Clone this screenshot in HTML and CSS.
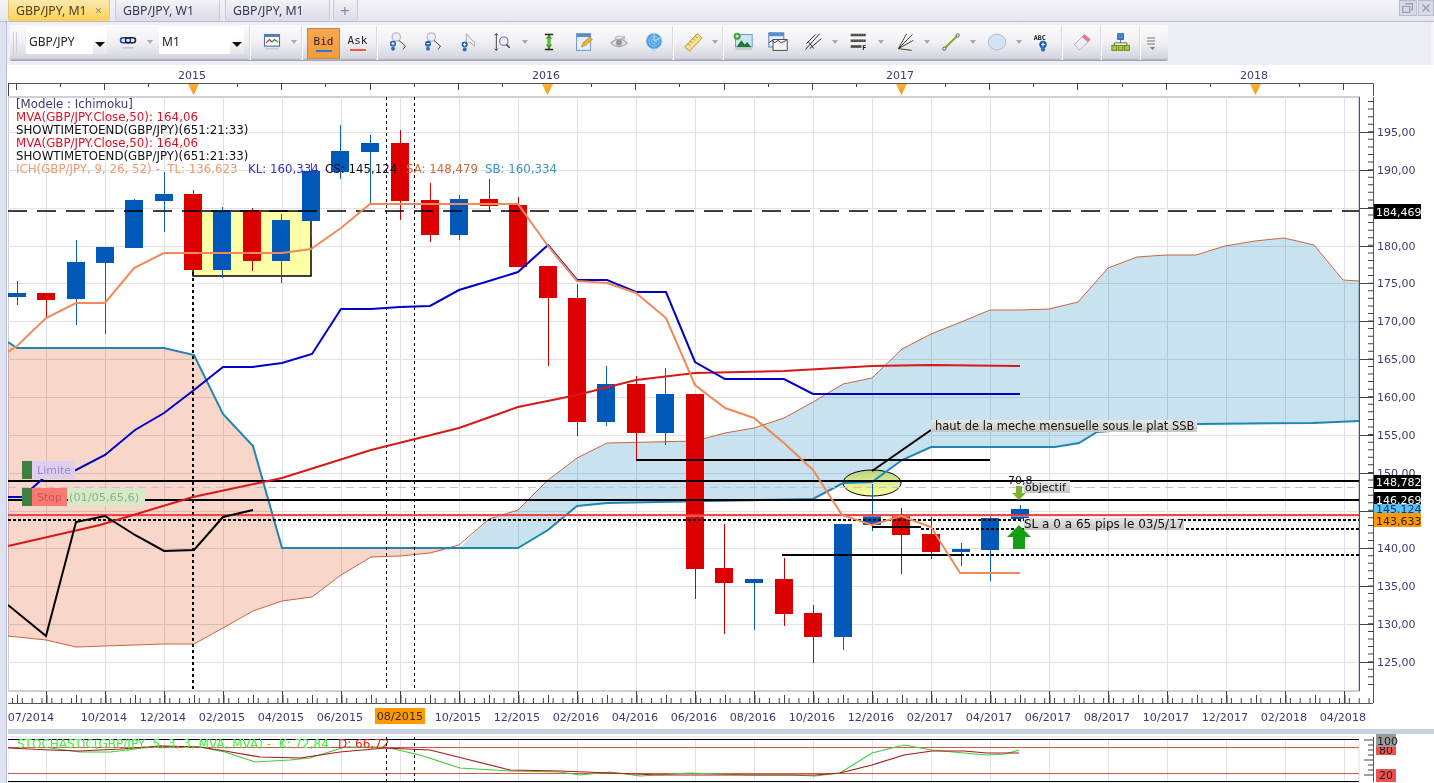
FILE: index.html
```html
<!DOCTYPE html>
<html lang="fr">
<head>
<meta charset="utf-8">
<title>GBP/JPY, M1</title>
<link rel="stylesheet" href="styles.css">
</head>
<body>
<svg class="defs" aria-hidden="true">
  <defs>
    <linearGradient id="marker" x1="0" y1="0" x2="0" y2="1"><stop offset="0" stop-color="#ffb040"/><stop offset="1" stop-color="#f59a10"/></linearGradient>
    <linearGradient id="ell" x1="0" y1="0" x2="0" y2="1"><stop offset="0" stop-color="#b4d288"/><stop offset=".45" stop-color="#dcea8e"/><stop offset="1" stop-color="#ffff96"/></linearGradient>
    <linearGradient id="note" x1="0" y1="0" x2="0" y2="1"><stop offset="0" stop-color="#e8e8e8"/><stop offset="1" stop-color="#c4c4c4"/></linearGradient>
    <symbol id="i-zoomin" viewBox="0 0 24 24"><circle cx="10" cy="6" r="5" fill="#eef" stroke="#bbb" stroke-width="1.5"/><path d="M13 10l8 7-3 4" fill="none" stroke="#444" stroke-width="1.2"/><circle cx="6" cy="14" r="3.6" fill="#1a5fb4"/><path d="M4 14h4M6 12v4" stroke="#fff" stroke-width="1.3"/><circle cx="6" cy="20" r="2.4" fill="#3a6fb8"/></symbol>
    <symbol id="i-zoomout" viewBox="0 0 24 24"><circle cx="10" cy="6" r="5" fill="#eef" stroke="#bbb" stroke-width="1.5"/><path d="M13 10l8 7-3 4" fill="none" stroke="#444" stroke-width="1.2"/><circle cx="6" cy="14" r="3.6" fill="#1a5fb4"/><path d="M4 14h4" stroke="#fff" stroke-width="1.3"/><circle cx="6" cy="20" r="2.4" fill="#3a6fb8"/></symbol>
    <symbol id="i-cursor" viewBox="0 0 24 24"><path d="M10 2v13l4-3 6 5V13z" fill="#eef" stroke="#aaa" stroke-width="1.2"/><circle cx="8" cy="15" r="3.6" fill="#1a5fb4"/><path d="M6 15h4M8 13v4" stroke="#fff" stroke-width="1.3"/><circle cx="8" cy="21" r="2.4" fill="#3a6fb8"/></symbol>
    <symbol id="i-fit" viewBox="0 0 24 24"><path d="M4 2v20M2 4l2-2 2 2M2 20l2 2 2-2" fill="none" stroke="#333" stroke-width="1.1"/><circle cx="13" cy="11" r="5" fill="#eef" stroke="#778" stroke-width="1.4"/><path d="M16 15l4 4" stroke="#333" stroke-width="1.6"/></symbol>
    <symbol id="i-height" viewBox="0 0 24 24"><path d="M7 3h10M7 21h10M12 3v18" stroke="#222" stroke-width="1.6" fill="none"/><path d="M12 3l4 5H8zM12 20l4-5H8z" fill="#3a9a20"/><rect x="10" y="7" width="4" height="9" fill="#5dbb3a"/></symbol>
    <symbol id="i-note" viewBox="0 0 24 24"><rect x="3" y="2" width="17" height="20" fill="#e6eef9" stroke="#5a8ccc"/><rect x="3" y="2" width="17" height="4" fill="#5a8ccc"/><path d="M9 18l2-5 8-7 3 3-8 7z" fill="#f0b030" stroke="#b07010" stroke-width=".7"/></symbol>
    <symbol id="i-eye" viewBox="0 0 24 24"><path d="M2 13q10-9 20 0q-10 9-20 0z" fill="#e2e2e2" stroke="#aaa" stroke-width="1.3"/><circle cx="12" cy="13" r="3.6" fill="#999"/><path d="M6 7q6-5 11-1l1-3 2 6-6-1 2-1q-4-3-8 1z" fill="#bbb"/></symbol>
    <symbol id="i-globe" viewBox="0 0 24 24"><circle cx="12" cy="11" r="9.5" fill="#4f9fe0" stroke="#a5cdee"/><circle cx="12" cy="11" r="6" fill="none" stroke="#a9d4f2"/><circle cx="12" cy="11" r="3" fill="none" stroke="#a9d4f2"/><path d="M12 11l8-4M12 11V2" stroke="#cfe8f8"/><path d="M8 23l4-2 4 2" fill="#b8d6ee"/></symbol>
    <symbol id="i-ruler" viewBox="0 0 24 24"><path d="M2 18L17 2l6 5L8 23z" fill="#f7de88" stroke="#a88a30"/><path d="M6 14l2 2M9 11l2 2M12 8l2 2M15 5l2 2" stroke="#8a6d20"/></symbol>
    <symbol id="i-pic" viewBox="0 0 24 24"><rect x="3" y="3" width="20" height="15" fill="#cfe4f8" stroke="#5a8ccc"/><path d="M4 18l6-8 4 5 3-3 5 6z" fill="#1c7a2c"/><circle cx="5" cy="5" r="4.2" fill="#3aa03a"/><path d="M3 5h4M5 3v4" stroke="#fff" stroke-width="1.3"/><rect x="3" y="19" width="20" height="3" fill="#c8cfc8"/></symbol>
    <symbol id="i-win" viewBox="0 0 24 24"><rect x="1" y="1" width="18" height="17" fill="#e8f0fa" stroke="#3a6cb8"/><rect x="1" y="1" width="18" height="4" fill="#5a8ccc"/><rect x="6" y="9" width="17" height="13" fill="#f4f4f8" stroke="#333"/><path d="M1 13l4-3 3 3 4-3 4 3 6-3" fill="none" stroke="#222"/></symbol>
    <symbol id="i-fork" viewBox="0 0 24 24"><path d="M3 21L20 2M8 20L22 8M4 14L15 3M6 11l7 9" fill="none" stroke="#222" stroke-width="1.1"/></symbol>
    <symbol id="i-fib" viewBox="0 0 24 24"><path d="M2 2h18v3H2zM2 9h18v3H2zM2 16h13v3H2z" fill="#444"/><path d="M2 3.500h18M2 10.500h18" stroke="#aaa" stroke-dasharray="1 2"/><text class="ico-t" x="16" y="21">F</text></symbol>
    <symbol id="i-fan" viewBox="0 0 24 24"><path d="M4 20L21 3M4 20L22 10M4 20L14 2M4 20l16 2" fill="none" stroke="#333" stroke-width="1.1"/></symbol>
    <symbol id="i-line" viewBox="0 0 24 24"><path d="M4 20L20 4" stroke="#7aa61c" stroke-width="2.4"/><circle cx="4" cy="20" r="2" fill="#ddd" stroke="#555"/><circle cx="20" cy="4" r="2" fill="#ddd" stroke="#555"/></symbol>
    <symbol id="i-ellipse" viewBox="0 0 24 24"><ellipse cx="12" cy="12" rx="10.500" ry="9.500" fill="#d5e3f3" stroke="#9db4cf"/></symbol>
    <symbol id="i-abc" viewBox="0 0 24 24"><text class="ico-t" x="1" y="9">ABC</text><circle cx="12" cy="15" r="4.400" fill="#1a5fb4"/><path d="M9.600 15h4.800M12 12.600v4.800" stroke="#fff" stroke-width="1.4"/><circle cx="12" cy="21" r="2.600" fill="#3a6fb8"/></symbol>
    <symbol id="i-eraser" viewBox="0 0 24 24"><path d="M3 15L15 3l7 6-12 12H8z" fill="#ececf2" stroke="#aaa"/><path d="M12 6l3-3 7 6-3 3z" fill="#e8788a"/></symbol>
    <symbol id="i-tree" viewBox="0 0 24 24"><rect x="8" y="2" width="7" height="7" fill="#3f88d8" stroke="#205fa8"/><path d="M11.500 9v4M4 17v-4h15v4" fill="none" stroke="#555"/><rect x="1" y="16" width="6" height="6" fill="#a8c83a" stroke="#5c7a10"/><rect x="8.500" y="16" width="6" height="6" fill="#a8c83a" stroke="#5c7a10"/><rect x="16" y="16" width="6" height="6" fill="#a8c83a" stroke="#5c7a10"/></symbol>
  </defs>
</svg>

<div class="app">
  <header class="tabbar">
    <div class="tab tab-active"><span>GBP/JPY, M1</span><span class="tab-x">✕</span></div>
    <div class="tab"><span>GBP/JPY, W1</span></div>
    <div class="tab"><span>GBP/JPY, M1</span></div>
    <div class="tab tab-plus">+</div>
    <div class="win-btns">
      <svg class="win-btn" viewBox="0 0 18 16"><path d="M6 3h8v7h-2M3 6h8v7H3z" fill="none" stroke="#9a9ab0" stroke-width="1.4"/></svg>
      <svg class="win-btn win-close" viewBox="0 0 16 16"><path d="M4 4l8 8M12 4l-8 8" stroke="#a0a0b4" stroke-width="2"/></svg>
    </div>
  </header>

  <div class="toolband">
    <div class="toolbar">
      <div class="grip"></div>
      <div class="combo combo-sym"><span>GBP/JPY</span><i class="combo-arrow"></i></div>
      <div class="btn btn-link"><svg class="ico" viewBox="0 0 24 24"><rect x="3" y="7" width="12" height="6" rx="3" fill="none" stroke="#1a3fa8" stroke-width="1.800"/><rect x="9" y="7" width="12" height="6" rx="3" fill="none" stroke="#222" stroke-width="1.800"/><path d="M5 19h14" stroke="#c8c8d4" stroke-width="2"/></svg></div>
      <div class="drop drop-link"></div>
      <div class="combo combo-tf"><span>M1</span><i class="combo-arrow"></i></div>
      <div class="sep"></div>
      <div class="btn btn-chart"><svg class="ico" viewBox="0 0 24 24"><rect x="3" y="3" width="18" height="14" fill="#f4f7fc" stroke="#4a6fb0" stroke-width="1.300"/><rect x="3" y="3" width="18" height="3" fill="#5a80c0"/><path d="M5 13l4-4 3 3" fill="none" stroke="#c03020" stroke-width="1.400"/><path d="M12 12l3-3 4 3" fill="none" stroke="#2a9030" stroke-width="1.400"/><path d="M4 20h16" stroke="#c8c8d4" stroke-width="2"/></svg></div>
      <div class="drop"></div>
      <div class="sep"></div>
      <div class="ba ba-on"><span>Bid</span><i class="ba-bid"></i></div>
      <div class="ba"><span>Ask</span><i class="ba-ask"></i></div>
      <div class="sep"></div>
      <div class="btn btn-first"><svg class="ico"><use href="#i-zoomin"/></svg></div>
      <div class="btn"><svg class="ico"><use href="#i-zoomout"/></svg></div>
      <div class="btn"><svg class="ico"><use href="#i-cursor"/></svg></div>
      <div class="btn"><svg class="ico"><use href="#i-fit"/></svg></div>
      <div class="drop"></div>
      <div class="btn"><svg class="ico"><use href="#i-height"/></svg></div>
      <div class="btn"><svg class="ico"><use href="#i-note"/></svg></div>
      <div class="btn"><svg class="ico"><use href="#i-eye"/></svg></div>
      <div class="btn"><svg class="ico"><use href="#i-globe"/></svg></div>
      <div class="sep"></div>
      <div class="btn"><svg class="ico"><use href="#i-ruler"/></svg></div>
      <div class="drop"></div>
      <div class="sep"></div>
      <div class="btn"><svg class="ico"><use href="#i-pic"/></svg></div>
      <div class="btn"><svg class="ico"><use href="#i-win"/></svg></div>
      <div class="btn"><svg class="ico"><use href="#i-fork"/></svg></div>
      <div class="drop"></div>
      <div class="btn"><svg class="ico"><use href="#i-fib"/></svg></div>
      <div class="drop"></div>
      <div class="btn"><svg class="ico"><use href="#i-fan"/></svg></div>
      <div class="drop"></div>
      <div class="btn"><svg class="ico"><use href="#i-line"/></svg></div>
      <div class="drop"></div>
      <div class="btn"><svg class="ico"><use href="#i-ellipse"/></svg></div>
      <div class="drop"></div>
      <div class="btn"><svg class="ico"><use href="#i-abc"/></svg></div>
      <div class="sep"></div>
      <div class="btn"><svg class="ico"><use href="#i-eraser"/></svg></div>
      <div class="sep"></div>
      <div class="btn"><svg class="ico"><use href="#i-tree"/></svg></div>
      <div class="sep"></div>
      <div class="more"><svg viewBox="0 0 10 14" class="more-ico"><path d="M1 2h8M1 5h8M1 8h8" stroke="#777"/><path d="M4 11h5l-2.500 3z" fill="#777"/></svg></div>
    </div>
  </div>

  <svg class="chart" viewBox="8 65 1426 718" role="img" aria-label="GBP/JPY monthly chart">
    <!-- year scale -->
    <g class="t-axis">
      <text x="192" y="78.500" text-anchor="middle">2015</text>
      <text x="546" y="78.500" text-anchor="middle">2016</text>
      <text x="900" y="78.500" text-anchor="middle">2017</text>
      <text x="1254" y="78.500" text-anchor="middle">2018</text>
    </g>
    <path class="rule" d="M8 83.500H1373.500V96"/>
    <path class="tick" d="M8.500 84v12M16.500 84v6M60.500 84v3M104.500 84v6M148.500 84v3M193.500 84v6M237.500 84v3M281.500 84v6M325.500 84v3M370.500 84v6M414.500 84v3M458.500 84v6M502.500 84v3M547.500 84v6M591.500 84v3M635.500 84v6M679.500 84v3M724.500 84v6M768.500 84v3M812.500 84v6M856.500 84v3M901.500 84v6M945.500 84v3M989.500 84v6M1033.500 84v3M1077.500 84v6M1122.500 84v3M1166.500 84v6M1210.500 84v3M1254.500 84v6M1299.500 84v3M1343.500 84v6"/>
    <path class="marker" d="M188 84h11l-5.500 11zM542 84h11l-5.500 11zM896 84h11l-5.500 11zM1250 84h11l-5.500 11z"/>

    <!-- plot frame and grid -->
    <rect class="plot" x="8" y="97" width="1351" height="594"/>
    <path class="grid" d="M46.500 97V691M105.500 97V691M164.500 97V691M223.500 97V691M282.500 97V691M341.500 97V691M400.500 97V691M459.500 97V691M518.500 97V691M577.500 97V691M636.500 97V691M695.500 97V691M754.500 97V691M813.500 97V691M872.500 97V691M931.500 97V691M990.500 97V691M1049.500 97V691M1108.500 97V691M1167.500 97V691M1226.500 97V691M1285.500 97V691M1344.500 97V691"/>
    <path class="grid" d="M8 132.500H1359M8 170.500H1359M8 208.500H1359M8 246.500H1359M8 283.500H1359M8 321.500H1359M8 359.500H1359M8 397.500H1359M8 435.500H1359M8 473.500H1359M8 511.500H1359M8 548.500H1359M8 586.500H1359M8 624.500H1359M8 662.500H1359"/>

    <!-- ichimoku cloud -->
    <path class="cloud-pink" d="M8 342L17 348H164L194 355L223 414L253 446L282 548H459L430 553L400 556L371 557L341 575L312 597L282 601L253 611L223 628L194 644H164L76 647L46 640L8 636Z"/>
    <path class="cloud-blue" d="M459 548H518L548 530L577 506L607 503L813 499L843 483L872 482L902 460L931 447L1055 447L1079 443L1097 432L1198 424L1313 423L1359 421V281H1343L1314 245L1284 238L1255 241L1225 246L1196 255L1166 255L1137 257L1108 268L1078 302L1049 309L1020 310L990 310L961 322L931 334L902 349L872 378L843 384L813 402L784 418L754 428L725 433L695 441L607 443L577 458L548 480L518 510L489 519Z"/>
    <ellipse class="ellipse" cx="872" cy="483" rx="29" ry="13"/>
    <path class="span-a" d="M8 636L46 640L76 647L164 644L194 644L223 628L253 611L282 601L312 597L341 575L371 557L400 556L430 553L459 545L489 519L518 510L548 480L577 458L607 443L695 441L725 433L754 428L784 418L813 402L843 384L872 378L902 349L931 334L961 322L990 310L1020 310L1049 309L1078 302L1108 268L1137 257L1166 255L1196 255L1225 246L1255 241L1284 238L1314 245L1343 280L1359 281"/>
    <path class="span-b" d="M8 342L17 348H164L194 355L223 414L253 446L282 548H518L548 530L577 506L607 503L813 499L843 483L872 482L902 460L931 447L1055 447L1079 443L1097 432L1198 424L1313 423L1359 421"/>

    <!-- drawn zone -->
    <rect class="zone" x="193" y="211" width="118" height="65"/>
    <path class="hdash-light" d="M8 487.500H1359"/>

    <!-- candles -->
    <path class="wick-blue" d="M17.500 281V305M76.500 240V325M105.500 247V334M134.500 199V248M164.500 172V232M222.500 207V278M281.500 214V283M311.500 163V237M340.500 125V179M370.500 135V203M459.500 195V240M606.500 366V426M665.500 368V445M754.500 579V630M843.500 524V650M872.500 484V531M961.500 543V566M990.500 516V581M1020.500 505V522"/>
    <path class="wick-red" d="M46.500 293V318M193.500 190V272M252.500 208V271M400.500 130V220M430.500 183V242M489.500 179V212M518.500 197V267M548.500 266V366M577.500 284V436M636.500 376V460M695.500 394V599M724.500 524V634M784.500 558V626M813.500 605V663M901.500 508V574M931.500 517V559"/>
    <path class="body-blue" d="M17 293V297M76 262V299M105 247V263M134 200V248M164 194V201M222 210V270M281 220V261M311 171V221M340 151V172M370 143V152M459 199V235M606 384V422M665 394V433M754 579V583M843 524V637M872 515V525M961 549V552M990 518V550M1020 509V519"/>
    <path class="body-red" d="M46 293V300M193 194V270M252 210V261M400 143V201M430 200V235M489 199V206M518 205V267M548 266V298M577 298V422M636 384V433M695 394V569M724 568V583M784 579V614M813 613V637M901 515V535M931 534V552"/>

    <!-- levels -->
    <path class="hdash" d="M8 211H1359"/>
    <path class="hline" d="M8 481H1359M8 500H1359M636 460H990M782 555H961M872 527H921"/>
    <path class="hred-soft" d="M8 515.500H1359"/>
    <path class="hred" d="M8 515H1359"/>
    <path class="hdot" d="M8 520H1359M921 529H1359M961 555H1359"/>
    <path class="vdot" d="M193 272V690"/>
    <path class="vdash" d="M386.500 97V691M414.500 97V691"/>

    <!-- indicators -->
    <path class="ma" d="M8 546L100 525L193 497L282 478L371 450L459 428L518 407L577 395L636 380L695 373L784 371L872 366L931 365L1020 366"/>
    <path class="kijun" d="M8 497H22L46 476L76 470L105 455L135 430L164 413L194 390L223 367H253L282 363L312 354L341 309H371L400 307L430 306L459 290L489 281L518 272L548 245L577 280H607L636 292H666L695 362L725 379H784L813 394H1020"/>
    <path class="tenkan" d="M8 352L17 346L46 318L76 303H105L134 268L164 253H282L311 249L341 228L370 204H518L548 246L577 281L607 283L636 293L666 318L695 385L725 408L754 418L784 443L813 470L842 515L872 525L901 516L931 527L960 573H1020"/>
    <path class="chikou" d="M8 605L46 636L76 522L105 516L135 535L164 551L194 550L223 517L253 510"/>

    <!-- annotations -->
    <path class="note-line" d="M872 471L931 430"/>
    <rect class="note" x="931" y="420" width="266" height="12"/>
    <text class="note-t" x="935" y="430">haut de la meche mensuelle sous le plat SSB</text>
    <rect class="note" x="1024" y="481" width="46" height="12"/>
    <text class="note-s" x="1025" y="491">objectif</text>
    <text class="note-s" x="1008" y="484">70,8</text>
    <path class="arrow-s" d="M1016 486h6v7h4l-7 7-7-7h4z"/>
    <rect class="note" x="1024" y="518" width="160" height="12"/>
    <text class="note-l" x="1024" y="528">SL a 0 a 65 pips le 03/5/17</text>
    <path class="arrow-b" d="M1019 525l12 12h-6v12h-12v-12h-6z"/>

    <!-- order labels -->
    <rect class="ord-handle" x="22" y="461" width="10" height="18"/>
    <rect class="ord-limit" x="32" y="461" width="43" height="18"/>
    <text class="ord-limit-t" x="37" y="474">Limite</text>
    <rect class="ord-handle" x="22" y="488" width="10" height="18"/>
    <rect class="ord-stop" x="32" y="488" width="35" height="18"/>
    <text class="ord-stop-t" x="37" y="501">Stop</text>
    <rect class="ord-val" x="68" y="488" width="77" height="18"/>
    <text class="ord-val-t" x="69" y="501">(01/05,65,6)</text>

    <!-- legend -->
    <g class="legend">
      <text class="lg-model" x="16" y="108">[Modele : Ichimoku]</text>
      <text class="lg-red" x="16" y="121">MVA(GBP/JPY.Close,50): 164,06</text>
      <text class="lg-black" x="16" y="134">SHOWTIMETOEND(GBP/JPY)(651:21:33)</text>
      <text class="lg-red" x="16" y="147">MVA(GBP/JPY.Close,50): 164,06</text>
      <text class="lg-black" x="16" y="160">SHOWTIMETOEND(GBP/JPY)(651:21:33)</text>
      <text class="lg-tl" x="16" y="173">ICH(GBP/JPY, 9, 26, 52) -  TL: 136,623</text>
      <text class="lg-kl" x="248" y="173">KL: 160,334</text>
      <text class="lg-black" x="325" y="173">CS: 145,124</text>
      <text class="lg-sa" x="406" y="173">SA: 148,479</text>
      <text class="lg-sb" x="485" y="173">SB: 160,334</text>
    </g>

    <!-- price axis -->
    <path class="rule" d="M1359.500 97V691M1373.500 97V703M8 703.500H1373"/>
    <path class="p-minor" d="M1371 97V691"/>
    <path class="tick" d="M1359 132.500h15M1359 170.500h15M1359 208.500h15M1359 246.500h15M1359 283.500h15M1359 321.500h15M1359 359.500h15M1359 397.500h15M1359 435.500h15M1359 473.500h15M1359 511.500h15M1359 548.500h15M1359 586.500h15M1359 624.500h15M1359 662.500h15"/>
    <g class="p-axis">
      <text x="1377" y="136">195,00</text><text x="1377" y="174">190,00</text><text x="1377" y="250">180,00</text><text x="1377" y="287">175,00</text><text x="1377" y="325">170,00</text><text x="1377" y="363">165,00</text><text x="1377" y="401">160,00</text><text x="1377" y="439">155,00</text><text x="1377" y="477">150,00</text><text x="1377" y="552">140,00</text><text x="1377" y="590">135,00</text><text x="1377" y="628">130,00</text><text x="1377" y="666">125,00</text>
    </g>
    <rect class="tag-black" x="1374" y="204" width="47" height="15"/><text class="tag-w" x="1376" y="216">184,469</text>
    <rect class="tag-black" x="1374" y="475" width="47" height="14"/><text class="tag-w" x="1376" y="486">148,782</text>
    <rect class="tag-black" x="1374" y="492" width="47" height="14"/><text class="tag-w" x="1376" y="504">146,269</text>
    <rect class="tag-blue" x="1374" y="504" width="47" height="10"/><text class="tag-b" x="1376" y="513">145,124</text>
    <rect class="tag-orange" x="1374" y="513" width="47" height="14"/><text class="tag-d" x="1376" y="525">143,633</text>

    <!-- date scale -->
    <path class="b-minor" d="M8 700.500H1373"/>
    <path class="b-mid" d="M17 699H1373"/>
    <path class="tick" d="M46.500 691v12M105.500 691v12M164.500 691v12M223.500 691v12M282.500 691v12M341.500 691v12M400.500 691v12M459.500 691v12M518.500 691v12M577.500 691v12M636.500 691v12M695.500 691v12M754.500 691v12M813.500 691v12M872.500 691v12M931.500 691v12M990.500 691v12M1049.500 691v12M1108.500 691v12M1167.500 691v12M1226.500 691v12M1285.500 691v12M1344.500 691v12"/>
    <rect class="date-hl" x="375" y="708" width="50" height="16"/>
    <g class="d-axis">
      <text x="31" y="721">07/2014</text><text x="104" y="721">10/2014</text><text x="163" y="721">12/2014</text><text x="222" y="721">02/2015</text><text x="281" y="721">04/2015</text><text x="340" y="721">06/2015</text><text class="d-hl" x="400" y="720">08/2015</text><text x="458" y="721">10/2015</text><text x="517" y="721">12/2015</text><text x="576" y="721">02/2016</text><text x="635" y="721">04/2016</text><text x="694" y="721">06/2016</text><text x="753" y="721">08/2016</text><text x="812" y="721">10/2016</text><text x="871" y="721">12/2016</text><text x="930" y="721">02/2017</text><text x="989" y="721">04/2017</text><text x="1048" y="721">06/2017</text><text x="1107" y="721">08/2017</text><text x="1166" y="721">10/2017</text><text x="1225" y="721">12/2017</text><text x="1284" y="721">02/2018</text><text x="1343" y="721">04/2018</text>
    </g>

    <!-- stochastic pane -->
    <rect class="splitter" x="8" y="729" width="1426" height="5"/>
    <rect class="s-frame" x="8" y="737" width="1351" height="46"/>
    <path class="grid" d="M46.500 739V782M105.500 739V782M164.500 739V782M223.500 739V782M282.500 739V782M341.500 739V782M400.500 739V782M459.500 739V782M518.500 739V782M577.500 739V782M636.500 739V782M695.500 739V782M754.500 739V782M813.500 739V782M872.500 739V782M931.500 739V782M990.500 739V782M1049.500 739V782M1108.500 739V782M1167.500 739V782M1226.500 739V782M1285.500 739V782M1344.500 739V782"/>
    <path class="s-black" d="M8 739.500H1359M8 781.500H1359"/>
    <path class="s-level" d="M8 747.500H1359M8 773.500H1359"/>
    <path class="s-green" d="M50 748L80 752H110L135 749L160 746L200 747L225 752L255 762L290 760L310 758L345 747H385L420 755L460 768L510 771L560 772L580 775L610 772L640 776L690 773L717 774L750 775H790L815 776L840 773L872 753L904 745L932 750L964 753L987 755L1005 754L1019 750"/>
    <path class="s-red" d="M8 748L50 750L80 751L120 749L160 746L200 747L225 751L260 757L300 758L340 752L385 748L430 750L470 760L510 770L560 771L610 773L660 775H815L840 773L872 765L904 755L932 751H964L987 753H1019"/>
    <text class="s-lg-g" x="17" y="748">STOCHASTIC(GBP/JPY, 5, 3, 3, MVA, MVA) -  K: 72,84</text>
    <text class="s-lg-r" x="338" y="748">D: 66,72</text>
    <path class="vdash" d="M386.500 737V781M414.500 737V781"/>
    <path class="rule" d="M1373.500 737V782"/>
    <path class="tick" d="M1364 740h10M1368 745h6M1368 750h6M1364 760h10M1368 755h6M1368 765h6M1368 770h6M1364 775h10"/>
    <rect class="tag-red" x="1376" y="744" width="20" height="11"/>
    <text class="tag-d" x="1379" y="754">80</text>
    <rect class="tag-grey" x="1376" y="734" width="20" height="13"/>
    <text class="tag-d" x="1377" y="745">100</text>
    <rect class="tag-red" x="1376" y="769" width="20" height="13"/>
    <text class="tag-d" x="1379" y="779">20</text>
  </svg>
</div>
</body>
</html>
```
FILE: styles.css
```css
* { box-sizing: border-box; }
html, body { margin: 0; padding: 0; height: 100%; overflow: hidden; background: #fff; }
body { font-family: "Noto Sans", "DejaVu Sans", sans-serif; }
.defs { width: 0; height: 0; display: block; }

.app { width: 1434px; height: 783px; display: flex; flex-direction: column; padding-left: 8px; background: #fff; box-shadow: inset 6px 0 0 #dde1f0, inset 7px 0 0 #b9bcd6; overflow: hidden; }

.tabbar { height: 22px; margin-left: -8px; padding-left: 8px; display: flex; align-items: stretch; gap: 5px; border-bottom: 1px solid #bcbccf; background: linear-gradient(#f4f4f8, #e6e6ef); flex: none; }
.tab { width: 105px; padding-left: 7px; display: flex; align-items: center; gap: 8px; font-size: 12.300px; color: #333a50; background: linear-gradient(#f2f2f7, #dadbe6); border: 1px solid #c6c7d8; border-top: 0; border-bottom: 0; border-radius: 0 0 3px 3px; }
.tab-active { width: 102px; background: linear-gradient(#fbe9b0, #ffd35a 90%); border-color: #e6c870; color: #4a4020; }
.tab-x { font-size: 9px; color: #8a8a80; font-weight: 700; }
.tab-plus { width: 25px; padding-left: 6px; margin-left: -2px; font-size: 17px; color: #8a8a9e; }
.win-btns { margin-left: auto; display: flex; gap: 1px; }
.win-btn { width: 18px; height: 16px; background: #d8d9e6; border: 1px solid #b9bacb; }
.win-close { width: 16px; }

.toolband { height: 43px; margin-left: -1px; padding: 3px 0 0 3px; background: #eeeef5; flex: none; box-shadow: inset -3px 0 0 #f6f6fa; }
.toolbar { width: 1158px; height: 36px; display: flex; align-items: center; background: linear-gradient(#fafafc 0%, #f2f2f6 45%, #d5d5df 92%, #9898aa 100%); border-radius: 2px; }
.grip { width: 16px; height: 22px; background: repeating-linear-gradient(90deg, #cfcfd8 0 1px, transparent 1px 3px); background-clip: content-box; padding: 0 8px 0 2px; }
.combo { height: 27px; margin-top: -6px; padding-left: 3px; display: flex; align-items: center; justify-content: space-between; background: #fff; font-size: 12px; color: #222; }
.combo-sym { width: 81px; }
.combo-tf { width: 85px; margin-right: 4px; }
.combo span { margin-top: 2px; }
.combo-arrow { width: 14px; height: 17px; align-self: flex-end; background: linear-gradient(#fff, #e4e4ea); position: relative; }
.combo-arrow::after { content: ""; position: absolute; left: 2px; top: 5px; border: 5px solid transparent; border-top: 5px solid #111; border-bottom: 0; }
.btn { width: 35px; height: 36px; flex: none; display: flex; justify-content: center; padding-top: 7px; }
.btn-link { margin-left: 3px; }
.drop-link { margin-right: 3px; }
.btn-chart { margin-left: 2px; }
.btn-first { margin-left: 1px; }
.ico { width: 20px; height: 20px; display: block; }
.drop { width: 11px; height: 36px; flex: none; position: relative; }
.drop::after { content: ""; position: absolute; left: 2px; top: 15px; border: 3.500px solid transparent; border-top: 4px solid #aaa; border-bottom: 0; }
.sep { width: 2px; height: 34px; margin: 0 1px; flex: none; background: linear-gradient(90deg, #d8d8e2 50%, #fff 50%); }
.ba { width: 35px; height: 31px; flex: none; display: flex; flex-direction: column; align-items: center; padding-top: 6px; font: 11px "DejaVu Sans Mono", "Liberation Mono", monospace; color: #222; }
.ba i { width: 16px; height: 2px; margin-top: 2px; display: block; }
.ba-bid { background: #2a7ad8; }
.ba-ask { background: #ee5a3a; }
.ba-on { width: 33px; background: linear-gradient(#f8a850, #f69b3a); border: 1px solid #b98a4a; margin-left: 3px; }
.ba-on i { background: #2a7ad8; }
.more { width: 18px; display: flex; justify-content: center; }
.more-ico { width: 10px; height: 14px; }
.ico-t { font: 700 8px "DejaVu Sans Mono", monospace; fill: #111; }

.chart { width: 1426px; height: 718px; display: block; flex: none; }
.chart text { font-family: "DejaVu Sans", "Noto Sans", sans-serif; font-size: 11px; white-space: pre; }
.chart .legend text { font-size: 11.800px; }

.t-axis text { fill: #3c3c6c; }
.rule { fill: none; stroke: #555; stroke-width: 1; }
.tick { fill: none; stroke: #444; stroke-width: 1; }
.marker { fill: url(#marker); }
.plot { fill: #fff; stroke: #ccd0d8; stroke-width: 2; }
.grid { fill: none; stroke: #dfe2e8; stroke-width: 1; }

.cloud-pink { fill: #f8d6c9; mix-blend-mode: multiply; }
.cloud-blue { fill: #c8e2f0; mix-blend-mode: multiply; }
.span-a { fill: none; stroke: #c8663c; stroke-width: 1; }
.span-b { fill: none; stroke: #1f86b4; stroke-width: 2; }
.zone { fill: #ffffa8; stroke: #000; stroke-width: 1.500; }
.hdash-light { fill: none; stroke: #c9c0d8; stroke-dasharray: 8 5; }

.wick-blue { fill: none; stroke: #0a5cb0; stroke-width: 1; }
.wick-red { fill: none; stroke: #d00000; stroke-width: 1; }
.body-blue { fill: none; stroke: #0058b8; stroke-width: 18; }
.body-red { fill: none; stroke: #dd0000; stroke-width: 18; }

.hdash { fill: none; stroke: #000; stroke-width: 1.400; stroke-dasharray: 19 10; }
.hline { fill: none; stroke: #000; stroke-width: 2; }
.hred { fill: none; stroke: #ee1c1c; stroke-width: 1.500; }
.hred-soft { fill: none; stroke: #f8b8b8; stroke-width: 2; }
.hdot { fill: none; stroke: #000; stroke-width: 2; stroke-dasharray: 3 2; }
.vdot { fill: none; stroke: #000; stroke-width: 2; stroke-dasharray: 3 3; }
.vdash { fill: none; stroke: #000; stroke-width: 1; stroke-dasharray: 3 3; }

.ma { fill: none; stroke: #d81818; stroke-width: 2; }
.kijun { fill: none; stroke: #0000c8; stroke-width: 2; }
.tenkan { fill: none; stroke: #f08a58; stroke-width: 2; }
.chikou { fill: none; stroke: #000; stroke-width: 2; }

.ellipse { fill: url(#ell); stroke: #000; stroke-width: 1; }
.note-line { stroke: #000; stroke-width: 2; }
.note { fill: url(#note); }
.chart .note-t { fill: #111; font-size: 11.500px; }
.chart .note-s { fill: #111; }
.chart .note-l { fill: #111; font-size: 12px; }
.arrow-s { fill: #7cb32c; }
.arrow-b { fill: #12a012; }

.ord-handle { fill: #3f7f3f; }
.ord-limit { fill: #dccff0; }
.chart .ord-limit-t { fill: #a483cc; }
.ord-stop { fill: #fa7a72; }
.chart .ord-stop-t { fill: #c05858; }
.ord-val { fill: #d7e9c8; }
.chart .ord-val-t { fill: #8cb488; font-size: 11.300px; }

.lg-model { fill: #3c3c6c; }
.lg-red { fill: #dd1122; }
.lg-black { fill: #111; }
.lg-tl { fill: #f09a70; }
.lg-kl { fill: #3030c8; }
.lg-sa { fill: #d0683c; }
.lg-sb { fill: #3a94c4; }

.p-minor { fill: none; stroke: #444; stroke-width: 6; stroke-dasharray: 1 6.570; stroke-dashoffset: -4; }
.chart .p-axis text { fill: #3c3c6c; }
.tag-black { fill: #000; }
.tag-blue { fill: #5cc0f2; }
.tag-orange { fill: #ff9a00; }
.tag-grey { fill: #9a9a9a; }
.tag-red { fill: #f05050; }
.chart .tag-w { fill: #fff; }
.chart .tag-b { fill: #12366a; }
.chart .tag-d { fill: #222; }

.b-minor { fill: none; stroke: #444; stroke-width: 5; stroke-dasharray: 1 8.830; stroke-dashoffset: -4; }
.b-mid { fill: none; stroke: #444; stroke-width: 8; stroke-dasharray: 1 28.500; }
.date-hl { fill: #ff9a00; }
.d-axis text { text-anchor: middle; }
.chart .d-axis text { fill: #3c3c6c; font-size: 11.200px; }
.chart .d-axis .d-hl { fill: #3a2a10; }

.splitter { fill: #c8d3df; }
.s-frame { fill: #fff; stroke: #dfe2e8; }
.s-black { fill: none; stroke: #000; stroke-width: 1; }
.s-level { fill: none; stroke: #d8564a; stroke-width: 1; }
.s-green { fill: none; stroke: #48c83c; stroke-width: 1.200; }
.s-red { fill: none; stroke: #a81818; stroke-width: 1.200; }
.chart .s-lg-g { fill: #44ee44; font-size: 12px; }
.chart .s-lg-r { fill: #ee2222; font-size: 12px; }
```
